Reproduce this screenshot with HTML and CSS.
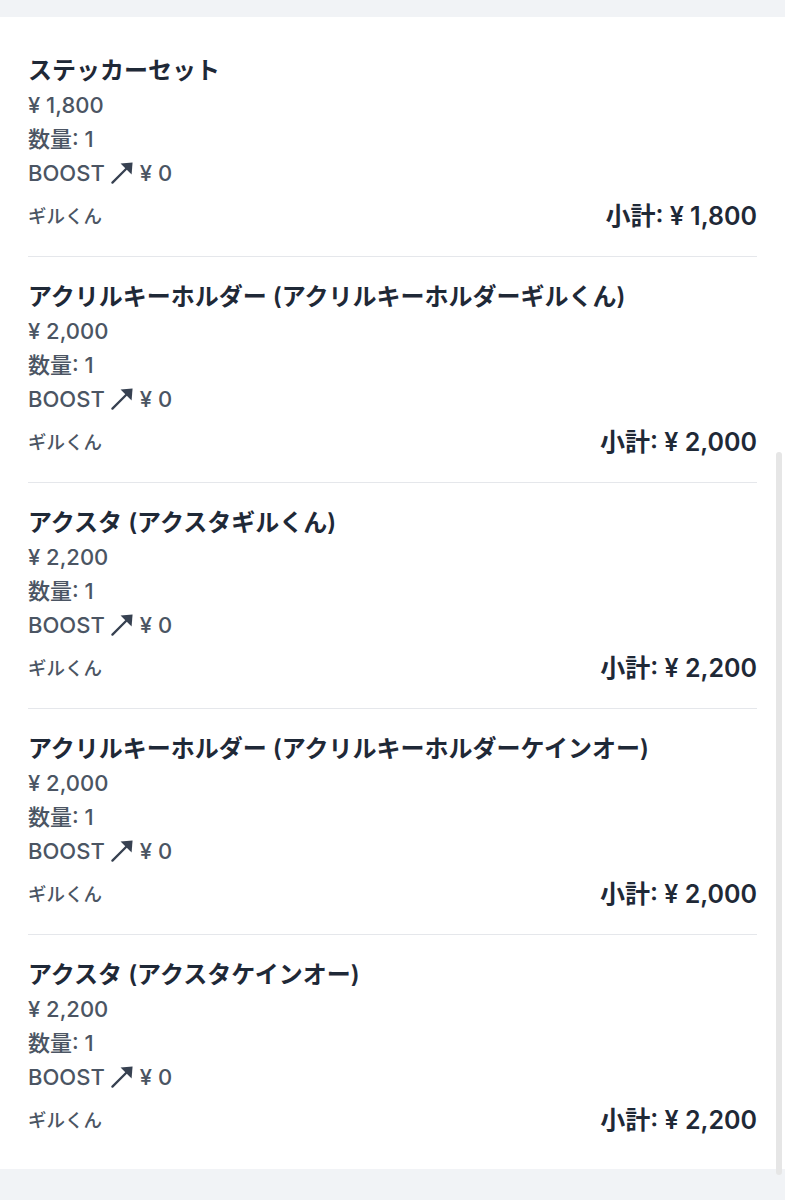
FILE: index.html
```html
<!DOCTYPE html>
<html lang="ja">
<head>
  <meta charset="UTF-8">
  <title>カート</title>
  <link rel="stylesheet" href="styles.css">
</head>
<body>
  <div class="cart">
    <div class="item">
      <div class="title">ステッカーセット</div>
      <div class="line">¥ 1,800</div>
      <div class="line">数量: 1</div>
      <div class="line">BOOST <svg class="boost" viewBox="0 0 24 24"><path d="M1.5 22.5 L17 7" stroke="currentColor" stroke-width="2.4" stroke-linecap="round"/><path d="M10 2.5 L22.5 1.5 L21.5 14 Z" fill="currentColor"/></svg> ¥ 0</div>
      <div class="foot">
        <span class="owner">ギルくん</span>
        <span class="sub">小計: ¥ 1,800</span>
      </div>
    </div>
    <div class="item">
      <div class="title">アクリルキーホルダー (アクリルキーホルダーギルくん)</div>
      <div class="line">¥ 2,000</div>
      <div class="line">数量: 1</div>
      <div class="line">BOOST <svg class="boost" viewBox="0 0 24 24"><path d="M1.5 22.5 L17 7" stroke="currentColor" stroke-width="2.4" stroke-linecap="round"/><path d="M10 2.5 L22.5 1.5 L21.5 14 Z" fill="currentColor"/></svg> ¥ 0</div>
      <div class="foot">
        <span class="owner">ギルくん</span>
        <span class="sub">小計: ¥ 2,000</span>
      </div>
    </div>
    <div class="item">
      <div class="title">アクスタ (アクスタギルくん)</div>
      <div class="line">¥ 2,200</div>
      <div class="line">数量: 1</div>
      <div class="line">BOOST <svg class="boost" viewBox="0 0 24 24"><path d="M1.5 22.5 L17 7" stroke="currentColor" stroke-width="2.4" stroke-linecap="round"/><path d="M10 2.5 L22.5 1.5 L21.5 14 Z" fill="currentColor"/></svg> ¥ 0</div>
      <div class="foot">
        <span class="owner">ギルくん</span>
        <span class="sub">小計: ¥ 2,200</span>
      </div>
    </div>
    <div class="item">
      <div class="title">アクリルキーホルダー (アクリルキーホルダーケインオー)</div>
      <div class="line">¥ 2,000</div>
      <div class="line">数量: 1</div>
      <div class="line">BOOST <svg class="boost" viewBox="0 0 24 24"><path d="M1.5 22.5 L17 7" stroke="currentColor" stroke-width="2.4" stroke-linecap="round"/><path d="M10 2.5 L22.5 1.5 L21.5 14 Z" fill="currentColor"/></svg> ¥ 0</div>
      <div class="foot">
        <span class="owner">ギルくん</span>
        <span class="sub">小計: ¥ 2,000</span>
      </div>
    </div>
    <div class="item">
      <div class="title">アクスタ (アクスタケインオー)</div>
      <div class="line">¥ 2,200</div>
      <div class="line">数量: 1</div>
      <div class="line">BOOST <svg class="boost" viewBox="0 0 24 24"><path d="M1.5 22.5 L17 7" stroke="currentColor" stroke-width="2.4" stroke-linecap="round"/><path d="M10 2.5 L22.5 1.5 L21.5 14 Z" fill="currentColor"/></svg> ¥ 0</div>
      <div class="foot">
        <span class="owner">ギルくん</span>
        <span class="sub">小計: ¥ 2,200</span>
      </div>
    </div>
    <div class="scrollbar"></div>
  </div>
</body>
</html>
```
FILE: styles.css
```css
body {
  margin: 0;
  font-family: Inter, "Noto Sans CJK JP", sans-serif;
  background-color: #f1f3f6;
  padding-top: 17px;
  height: 1183px;
}
.cart {
  position: relative;
  background: white;
  padding: 14px 0 9px;
}
.item {
  margin: 0 28px;
  padding: 26px 0;
}
.item + .item {
  border-top: 1px solid #e5e7eb;
}
.title {
  font-size: 24px;
  font-weight: 600;
  color: #1f2937;
  line-height: 28px;
  margin-bottom: 3px;
}
.line {
  font-size: 22px;
  font-weight: 500;
  color: #4b5563;
  line-height: 34px;
  display: flex;
  align-items: center;
  gap: 6px;
}
.boost {
  width: 23px;
  height: 23px;
  margin-top: -2px;
  color: #374151;
}
.foot {
  display: flex;
  justify-content: space-between;
  align-items: center;
  margin-top: 12px;
  line-height: 28px;
}
.owner {
  font-size: 18.5px;
  font-weight: 500;
  color: #4b5563;
}
.sub {
  font-size: 25px;
  font-weight: 600;
  color: #1f2937;
}
.scrollbar {
  position: absolute;
  right: 3px;
  top: 435px;
  width: 6px;
  height: 723px;
  border-radius: 3px;
  background: #e6e6e6;
}
```
